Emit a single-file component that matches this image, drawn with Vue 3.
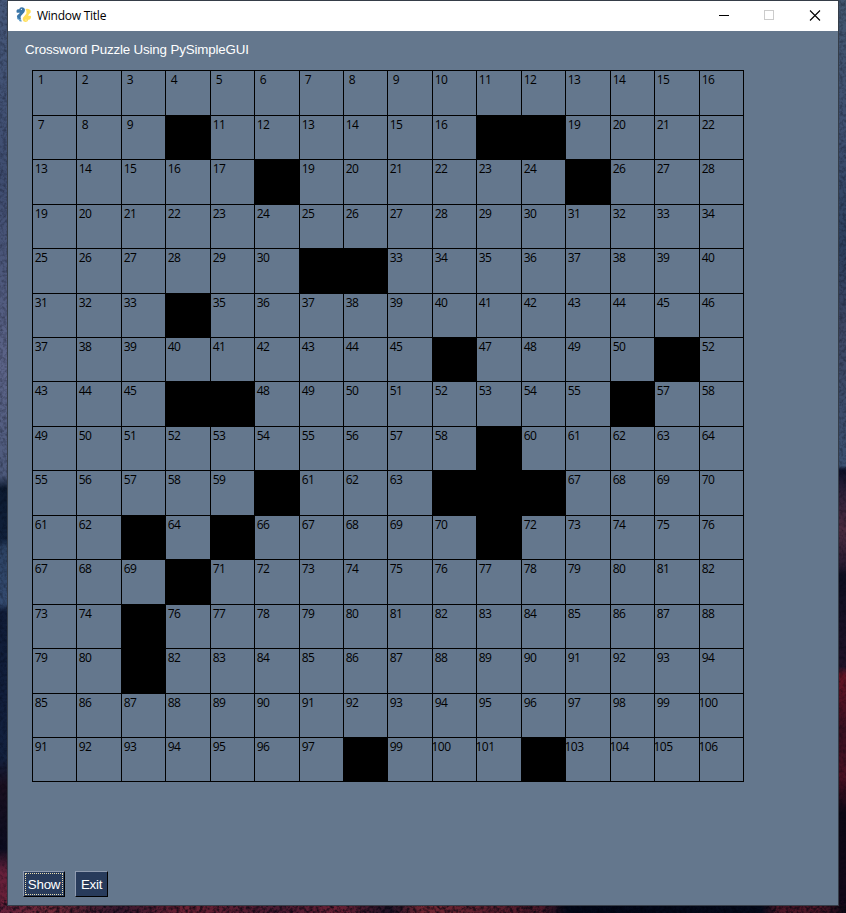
<script setup>
const SIZE = 16
const blocked = {
  1: [3, 10, 11],
  2: [5, 12],
  4: [6, 7],
  5: [3],
  6: [9, 14],
  7: [3, 4, 13],
  8: [10],
  9: [5, 9, 10, 11],
  10: [2, 4, 10],
  11: [3],
  12: [2],
  13: [2],
  15: [7, 11],
}
const cells = []
for (let row = 0; row < SIZE; row++) {
  for (let col = 0; col < SIZE; col++) {
    cells.push({ number: row * 6 + col + 1, black: (blocked[row] || []).includes(col) })
  }
}
</script>

<template>
  <div class="desktop">
    <svg class="wallpaper" width="846" height="913">
      <defs>
        <linearGradient id="left" x1="0" y1="0" x2="0" y2="1">
          <stop offset="0" stop-color="#46587a" />
          <stop offset="0.2" stop-color="#3f4d70" />
          <stop offset="0.4" stop-color="#5c6488" />
          <stop offset="0.52" stop-color="#4d5a7c" />
          <stop offset="0.535" stop-color="#0c1a30" />
          <stop offset="0.59" stop-color="#10203a" />
          <stop offset="0.6" stop-color="#2c4263" />
          <stop offset="0.66" stop-color="#344b70" />
          <stop offset="0.67" stop-color="#101c38" />
          <stop offset="0.83" stop-color="#12203e" />
          <stop offset="0.86" stop-color="#1a0f20" />
          <stop offset="0.93" stop-color="#0c0c20" />
          <stop offset="0.955" stop-color="#64203a" />
          <stop offset="1" stop-color="#6c2038" />
        </linearGradient>
        <linearGradient id="right" x1="0" y1="0" x2="0" y2="1">
          <stop offset="0" stop-color="#43566f" />
          <stop offset="0.15" stop-color="#3e4f70" />
          <stop offset="0.27" stop-color="#2b3e5c" />
          <stop offset="0.36" stop-color="#3d4663" />
          <stop offset="0.51" stop-color="#3b5070" />
          <stop offset="0.515" stop-color="#0c1028" />
          <stop offset="0.54" stop-color="#2c2038" />
          <stop offset="0.58" stop-color="#4b2c40" />
          <stop offset="0.62" stop-color="#261a30" />
          <stop offset="0.63" stop-color="#0d0e20" />
          <stop offset="0.73" stop-color="#1f1328" />
          <stop offset="0.74" stop-color="#641424" />
          <stop offset="0.8" stop-color="#36101f" />
          <stop offset="0.85" stop-color="#4a1022" />
          <stop offset="0.89" stop-color="#0c0814" />
          <stop offset="1" stop-color="#14081a" />
        </linearGradient>
        <linearGradient id="ground" x1="0" y1="0" x2="1" y2="0">
          <stop offset="0" stop-color="#64203a" />
          <stop offset="0.06" stop-color="#702a38" />
          <stop offset="0.14" stop-color="#35172c" />
          <stop offset="0.22" stop-color="#6a2032" />
          <stop offset="0.33" stop-color="#481a30" />
          <stop offset="0.4" stop-color="#6a2034" />
          <stop offset="0.46" stop-color="#211326" />
          <stop offset="0.5" stop-color="#702632" />
          <stop offset="0.64" stop-color="#4a1828" />
          <stop offset="0.67" stop-color="#030818" />
          <stop offset="0.9" stop-color="#050a1a" />
          <stop offset="0.92" stop-color="#4b1626" />
          <stop offset="0.97" stop-color="#4b1626" />
          <stop offset="1" stop-color="#0c0814" />
        </linearGradient>
        <filter id="grain" x="0" y="0" width="100%" height="100%" color-interpolation-filters="sRGB">
          <feTurbulence type="fractalNoise" baseFrequency="0.3" numOctaves="3" seed="4" />
          <feColorMatrix values="0 0 0 0 0  0 0 0 0 0.01  0 0 0 0 0.05  2.4 0 0 0 -0.95" />
        </filter>
      </defs>
      <rect width="423" height="913" fill="url(#left)" />
      <rect x="423" width="423" height="913" fill="url(#right)" />
      <rect y="905" width="846" height="8" fill="url(#ground)" />
      <rect width="846" height="913" filter="url(#grain)" opacity="0.3" />
      <rect y="900" width="846" height="13" filter="url(#grain)" opacity="0.6" />
    </svg>
    <main class="window">
      <header class="titlebar">
        <svg class="logo" width="16" height="16" viewBox="0 0 16 16">
          <path d="M4 .8Q6.2-.3 8.3 1.2Q9.6 3 8.3 5.2L5.1 8.8Q4.2 10 5 12.2Q2 12.5 1.2 10.7Q.3 8.7 2.5 7.3L4 5.7H.8Q-.2 3 1.8 2.2H3.2Z" fill="#3a76a8" />
          <path d="M9.5 2.1Q12.5.9 14.5 3.2Q15.7 5.2 13.2 7.1L12 8.5L14.9 9.1Q15.6 11.7 13.7 12.5L12.3 12.7Q11.8 15 9.3 15Q6.9 14.7 6.7 12.5Q6.5 10.8 8 9.6L10.4 6.5Q11.3 4.8 9.5 2.1Z" fill="#ffdf58" />
          <path d="M1.2 9.4Q2.3 12.3 5 12.2L5.8 14.5Q3.3 15 2.8 12.7Q.6 12.5 1.2 9.4Z" fill="#5d9bc9" />
          <circle cx="5.4" cy="2.3" r=".6" fill="#fff" />
          <circle cx="10" cy="13" r=".6" fill="#fff" />
        </svg>
        <span class="caption">Window Title</span>
        <svg class="controls" width="138" height="30" fill="none" shape-rendering="crispEdges">
          <path d="M19 14.5H29" stroke="#000" />
          <rect x="64.5" y="9.5" width="9" height="9" stroke="#ccc" />
          <path d="M110 9.5L120 19.5M120 9.5L110 19.5" stroke="#000" stroke-width="1.1" shape-rendering="auto" />
        </svg>
      </header>
      <h1 class="heading">Crossword Puzzle Using PySimpleGUI</h1>
      <section class="board">
        <div v-for="(cell, i) in cells" :key="i" class="cell" :class="{ black: cell.black }">
          <span v-if="!cell.black" class="number">{{ cell.number }}</span>
        </div>
      </section>
      <footer class="actions">
        <button class="btn show"><span class="focus">Show</span></button>
        <button class="btn exit">Exit</button>
      </footer>
    </main>
  </div>
</template>

<style>
body {
  margin: 0;
  overflow: hidden;
}
</style>

<style scoped>
.desktop {
  display: grid;
  width: 846px;
  height: 913px;
  overflow: hidden;
}
.wallpaper,
.window {
  grid-area: 1 / 1;
}
.window {
  z-index: 1;
  box-sizing: border-box;
  width: 832px;
  height: 906px;
  margin-left: 7px;
  border: 1px solid #353d48;
  background: #64778d;
  display: flex;
  flex-direction: column;
}
.titlebar {
  height: 30px;
  flex: none;
  background: #fff;
  display: flex;
  align-items: center;
}
.logo {
  margin-left: 8px;
  margin-top: -2px;
}
.caption {
  margin-left: 5px;
  font: 12px/16px "Open Sans", sans-serif;
  letter-spacing: -0.25px;
  color: #000;
}
.controls {
  margin-left: auto;
}
.heading {
  margin: 10px 0 0 17px;
  height: 29px;
  font: 13.33px/17px "Liberation Sans", Arial, sans-serif;
  letter-spacing: -0.15px;
  color: #fff;
}
.board {
  flex: none;
  width: 711px;
  margin-left: 24px;
  display: grid;
  grid-template-columns: 44px 45px 44px 45px 44px 45px 44px 44px 45px 44px 45px 44px 45px 44px 45px 44px;
  grid-template-rows: 45px 44px 45px 44px 45px 44px 44px 45px 44px 45px 44px 45px 44px 45px 44px 44px;
  border: solid #000;
  border-width: 0 1px 1px 0;
}
.cell {
  min-width: 0;
  border: solid #000;
  border-width: 1px 0 0 1px;
}
.cell.black {
  background: #000;
}
.number {
  display: block;
  width: 24px;
  margin-left: -4px;
  text-align: center;
  font: 12px/17px "Open Sans", sans-serif;
  letter-spacing: -0.5px;
  color: #000;
}
.actions {
  display: flex;
  gap: 10px;
  margin: 89px 0 0 15px;
}
.btn {
  box-sizing: border-box;
  height: 26px;
  padding: 2px 1px 1px;
  border: 1px solid;
  border-color: #8f9bb0 #000 #000 #8f9bb0;
  border-radius: 0;
  background: #283b5b;
  color: #fff;
  font: 13.33px/21px "Liberation Sans", Arial, sans-serif;
  letter-spacing: -0.25px;
}
.show {
  width: 42px;
  padding-top: 1px;
}
.exit {
  width: 33px;
}
.focus {
  display: block;
  height: 20px;
  line-height: 22px;
  border: 1px dotted #e8dcae;
}
</style>
